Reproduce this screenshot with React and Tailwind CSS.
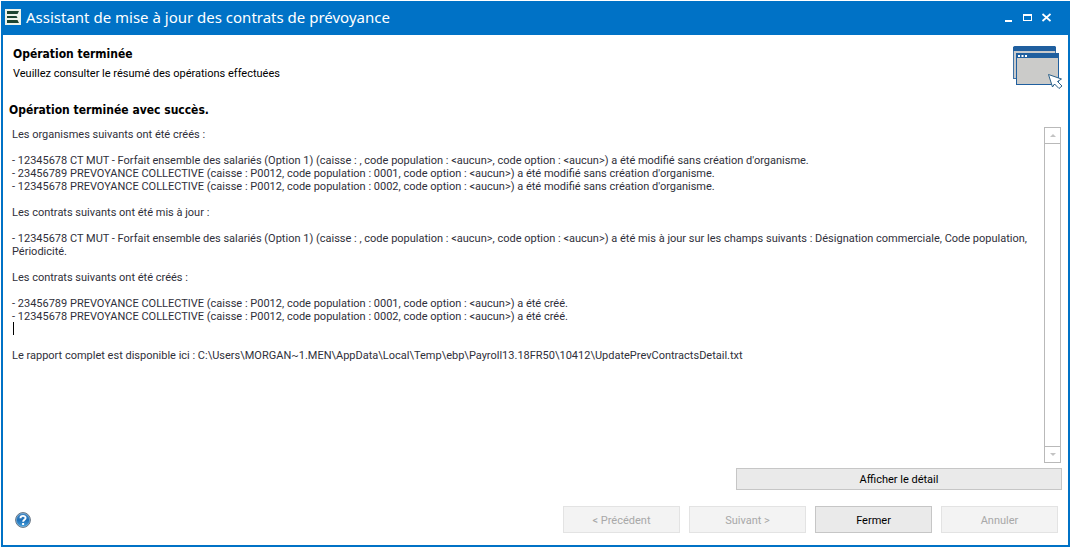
import React from 'react';

const report = `Les organismes suivants ont été créés :

- 12345678 CT MUT - Forfait ensemble des salariés (Option 1) (caisse : , code population : <aucun>, code option : <aucun>) a été modifié sans création d'organisme.
- 23456789 PREVOYANCE COLLECTIVE (caisse : P0012, code population : 0001, code option : <aucun>) a été modifié sans création d'organisme.
- 12345678 PREVOYANCE COLLECTIVE (caisse : P0012, code population : 0002, code option : <aucun>) a été modifié sans création d'organisme.

Les contrats suivants ont été mis à jour :

- 12345678 CT MUT - Forfait ensemble des salariés (Option 1) (caisse : , code population : <aucun>, code option : <aucun>) a été mis à jour sur les champs suivants : Désignation commerciale, Code population, Périodicité.

Les contrats suivants ont été créés :

- 23456789 PREVOYANCE COLLECTIVE (caisse : P0012, code population : 0001, code option : <aucun>) a été créé.
- 12345678 PREVOYANCE COLLECTIVE (caisse : P0012, code population : 0002, code option : <aucun>) a été créé.


Le rapport complet est disponible ici : C:\\Users\\MORGAN~1.MEN\\AppData\\Local\\Temp\\ebp\\Payroll13.18FR50\\10412\\UpdatePrevContractsDetail.txt`;

const AppLogo = () => (
  <svg width="16" height="16" viewBox="0 0 16 16" aria-hidden="true">
    <rect width="16" height="16" fill="#eef3ea" />
    <path d="M2 2h12l-1.500 3H2zM2 7h9.500l1 2H2zM2 11h10.500l1.500 3H2z" fill="#1d4430" />
  </svg>
);

const WindowsIcon = () => (
  <svg width="50" height="44" viewBox="0 0 50 44" aria-hidden="true">
    <rect x="0.500" y="1.500" width="42" height="31" fill="#c9cacb" stroke="#3f72a5" />
    <path d="M0 1L1.500 0H42L43 1V5H0z" fill="#1f5f9f" />
    <rect x="3.500" y="7.500" width="42" height="31" fill="#cbcbc9" stroke="#1f5f9f" />
    <path d="M3 8L4 7H45L46 8V12H3z" fill="#1f5f9f" />
    <path d="M5 9h2v2H5zM8.500 9h2v2h-2zM12 9h2v2h-2z" fill="#fff" />
    <path
      d="M35.500 28.500L48.500 33l-4 2.500L49 40L46 42.500L41.500 38L39.500 41z"
      fill="#fff"
      stroke="#2b6088"
    />
  </svg>
);

const HelpIcon = () => (
  <svg width="16" height="16" viewBox="0 0 16 16" aria-hidden="true">
    <defs>
      <linearGradient id="help" x1="0" y1="0" x2="0" y2="1">
        <stop offset="0" stopColor="#4a8cc6" />
        <stop offset="0.5" stopColor="#1e70b8" />
        <stop offset="1" stopColor="#4aa3dd" />
      </linearGradient>
    </defs>
    <circle cx="8" cy="8" r="7.400" fill="url(#help)" stroke="#6d7680" />
    <circle cx="8" cy="8" r="6.600" fill="none" stroke="#9cc4e4" strokeWidth="0.500" />
    <path
      d="M5.500 6.200C5.500 3.200 10.600 3.200 10.600 6C10.600 7.700 8.100 7.800 8.100 9.800"
      fill="none"
      stroke="#fff"
      strokeWidth="1.900"
    />
    <rect x="7.100" y="11" width="2" height="2" fill="#fff" />
  </svg>
);

const WizardButton = ({ children, disabled }) => (
  <button
    type="button"
    disabled={disabled}
    className="h-[27px] w-[117px] border border-[#c6c6c6] bg-[#eaeaea] pt-px text-black disabled:border-[#e3e3e3] disabled:bg-[#f3f3f3] disabled:text-[#a8a8a8]"
  >
    {children}
  </button>
);

const App = () => {
  return (
    <div className="flex min-h-screen bg-white p-px font-['Roboto',sans-serif] text-[11px] leading-[13px] text-black">
      <div className="flex flex-1 flex-col border-2 border-[#0072c6]">
        <header className="flex h-8 items-center bg-[#0072c6] pr-3.5 pb-1 pl-0.5 text-white">
          <AppLogo />
          <h1 className="ml-[5px] flex-1 font-['Noto_Sans',sans-serif] text-[15px] leading-6">
            Assistant de mise à jour des contrats de prévoyance
          </h1>
          <div className="flex gap-[3px]">
            <button type="button" aria-label="Réduire" className="flex w-4 justify-center">
              <svg width="10" height="10" viewBox="0 0 10 10">
                <rect x="2" y="8" width="7" height="2" fill="#fff" />
              </svg>
            </button>
            <button type="button" aria-label="Agrandir" className="flex w-4 justify-center">
              <svg width="10" height="10" viewBox="0 0 10 10">
                <path d="M1 2h9v7H1zM2 4v4h7V4z" fill="#fff" fillRule="evenodd" />
              </svg>
            </button>
            <button type="button" aria-label="Fermer la fenêtre" className="flex w-4 justify-center">
              <svg width="10" height="10" viewBox="0 0 10 10">
                <path d="M1.500 2l8 7M9.500 2l-8 7" stroke="#fff" strokeWidth="1.700" />
              </svg>
            </button>
          </div>
        </header>

        <div className="flex h-16 justify-between pt-[11px] pr-[5px] pl-2.5">
          <div>
            <h2 className="font-['DejaVu_Sans_Condensed','DejaVu_Sans',sans-serif] text-[12px] leading-4 font-bold">
              Opération terminée
            </h2>
            <p className="mt-[5px]">Veuillez consulter le résumé des opérations effectuées</p>
          </div>
          <WindowsIcon />
        </div>

        <main className="flex flex-1 flex-col px-1.5">
          <label
            htmlFor="report"
            className="mt-[3px] font-['DejaVu_Sans_Condensed','DejaVu_Sans',sans-serif] text-[12px] leading-4 font-bold"
          >
            Opération terminée avec succès.
          </label>
          <div className="mt-[9px] flex flex-1">
            <div className="relative flex flex-1">
              <textarea
                id="report"
                readOnly
                value={report}
                className="min-h-80 flex-1 resize-none overflow-hidden bg-white px-[3px] pt-px text-[#2f2f3a] outline-none"
              />
              {/* text caret */}
              <span className="absolute top-[195px] left-1 h-[13px] w-px bg-black" />
            </div>
            <div className="mr-px flex w-[17px] flex-col justify-between border border-[#b9b9b9]">
              <button type="button" aria-label="Défiler vers le haut" className="flex h-4 items-center justify-center border-b border-[#b9b9b9]">
                <svg width="6" height="3" viewBox="0 0 6 3">
                  <path d="M0 3L3 0L6 3z" fill="#c3c3c3" />
                </svg>
              </button>
              <button type="button" aria-label="Défiler vers le bas" className="flex h-4 items-center justify-center border-t border-[#b9b9b9]">
                <svg width="6" height="3" viewBox="0 0 6 3">
                  <path d="M0 0L3 3L6 0z" fill="#c3c3c3" />
                </svg>
              </button>
            </div>
          </div>
          <button type="button" className="mt-[5px] h-[22px] w-[326px] self-end border border-[#c6c6c6] bg-[#eaeaea]">
            Afficher le détail
          </button>
        </main>

        <footer className="flex items-center gap-[9px] pt-4 pr-2.5 pb-3 pl-3">
          <button type="button" aria-label="Aide" className="mr-auto">
            <HelpIcon />
          </button>
          <WizardButton disabled>&lt; Précédent</WizardButton>
          <WizardButton disabled>Suivant &gt;</WizardButton>
          <WizardButton>Fermer</WizardButton>
          <WizardButton disabled>Annuler</WizardButton>
        </footer>
      </div>
    </div>
  );
};

export default App;
